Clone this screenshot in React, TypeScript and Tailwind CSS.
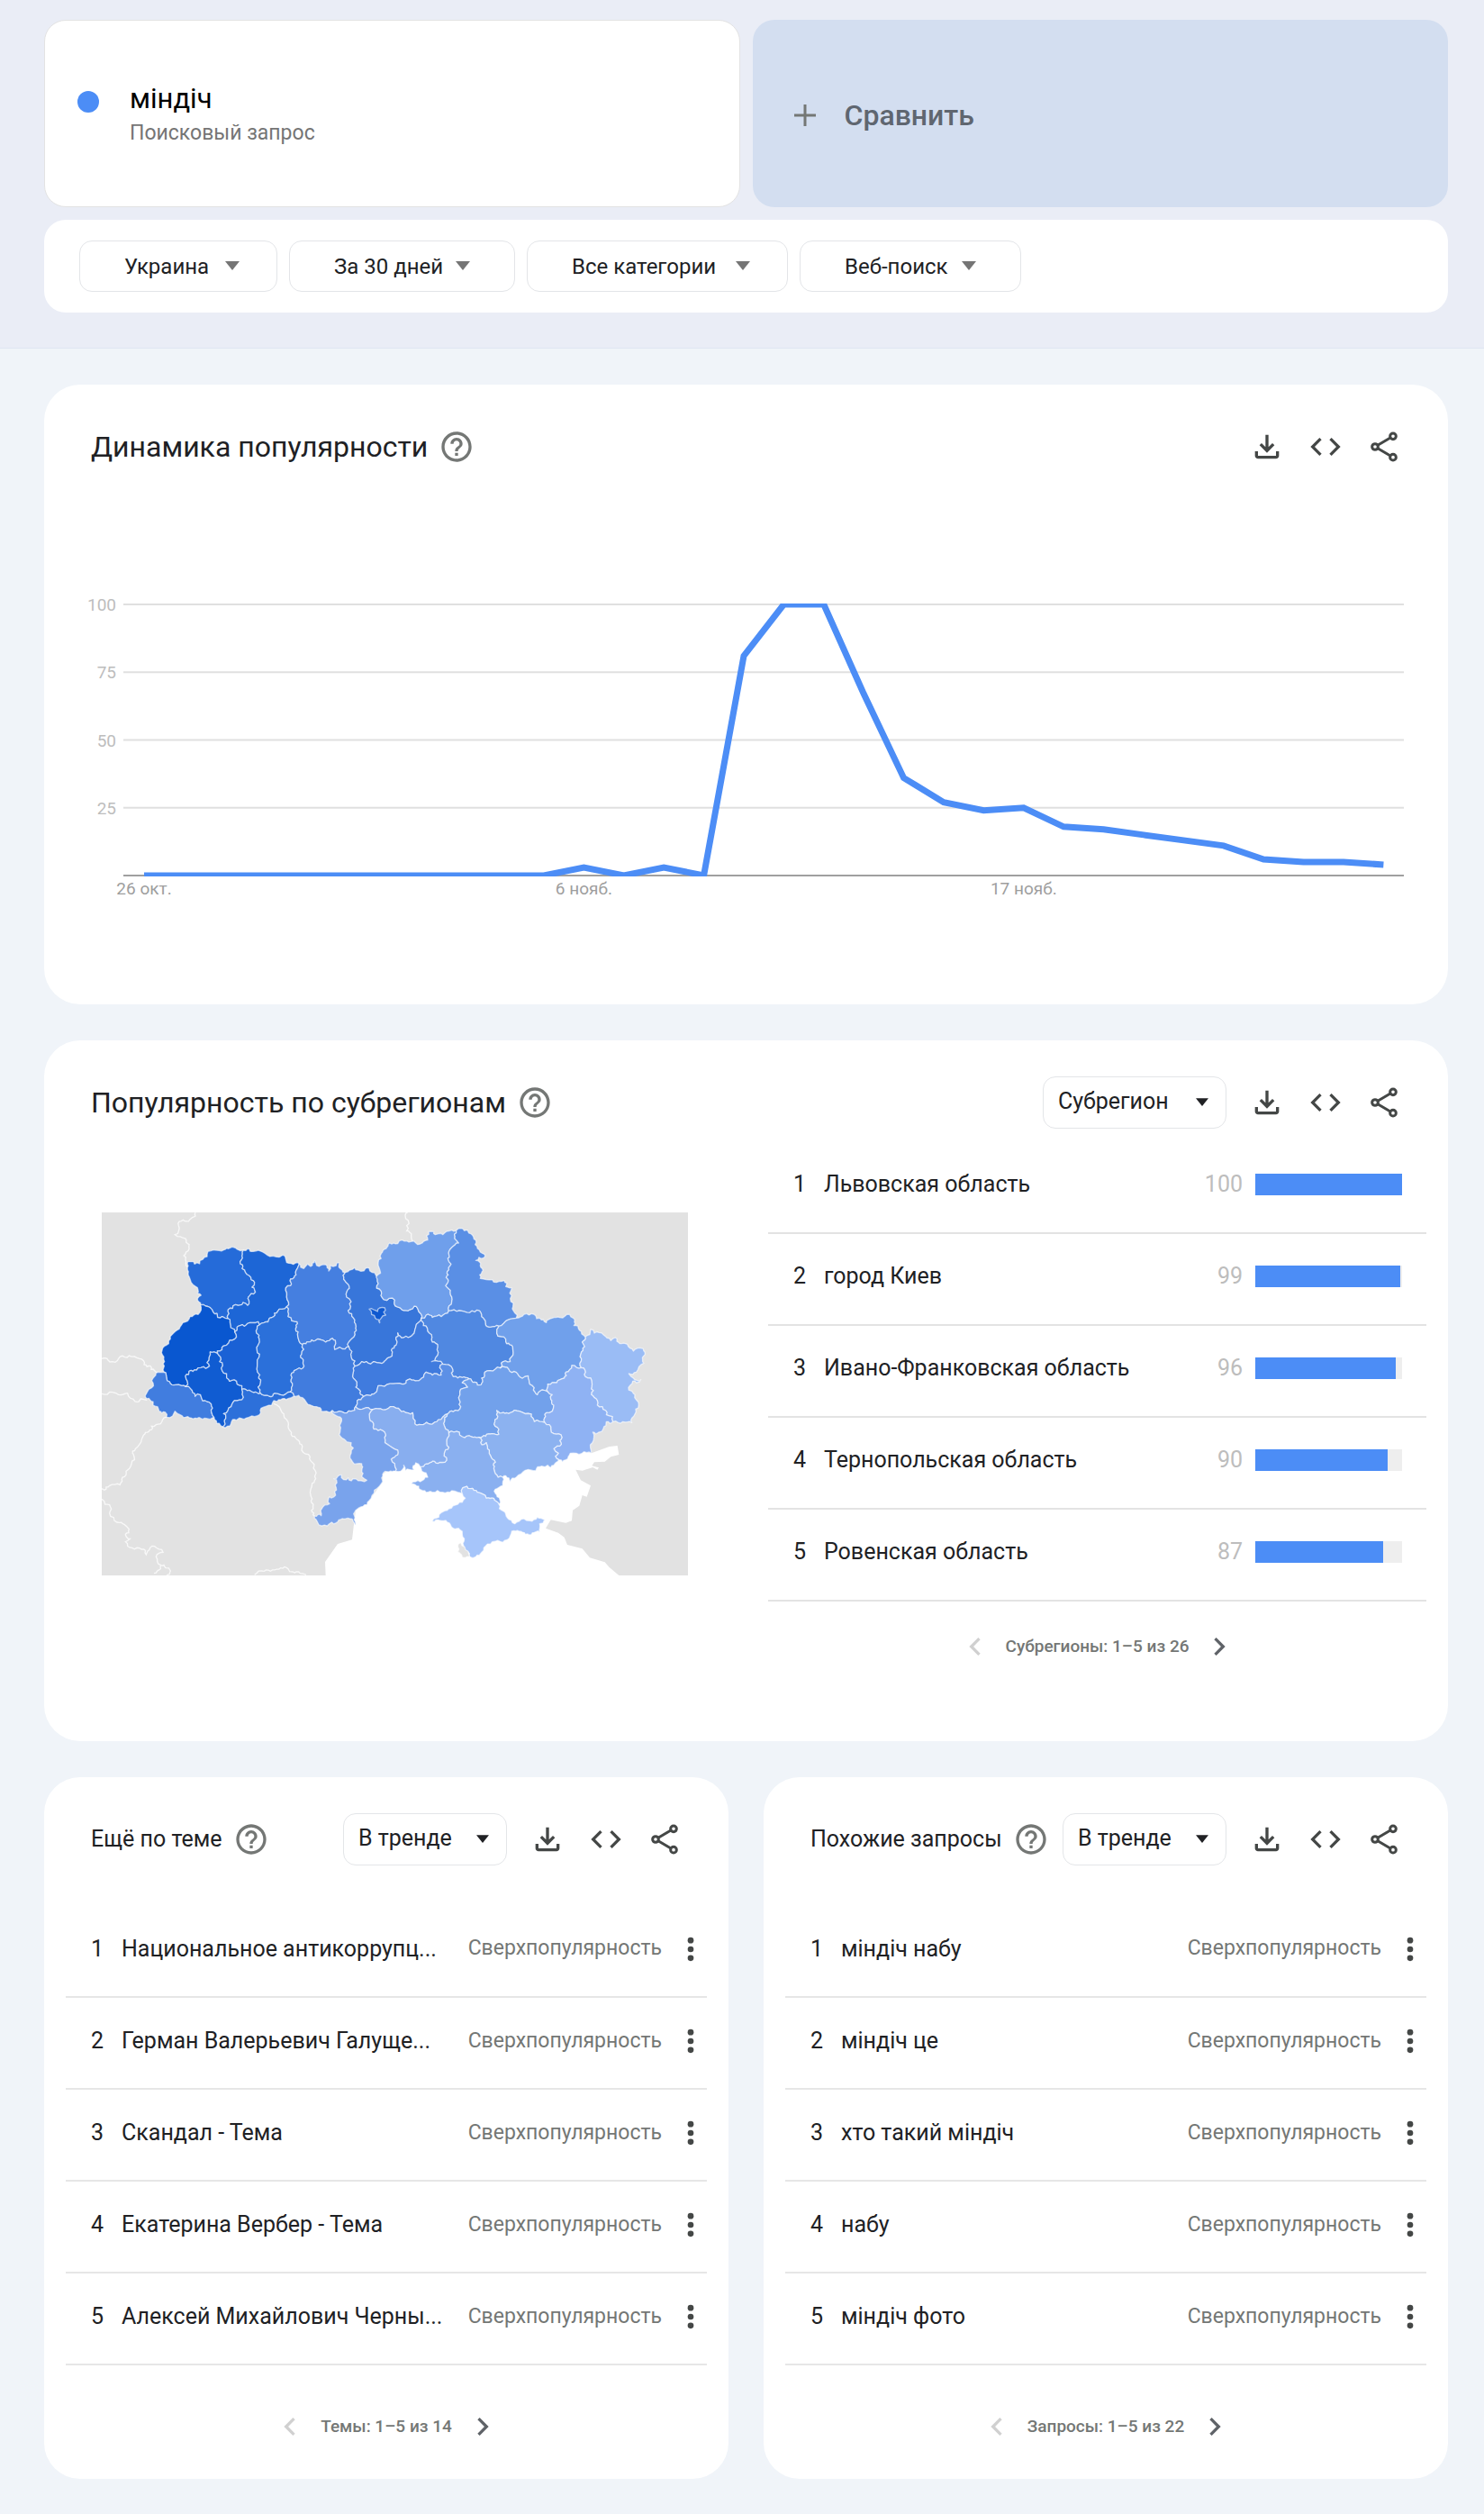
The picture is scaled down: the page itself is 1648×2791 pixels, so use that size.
import { useState } from 'react';
import type { ReactNode } from 'react';

interface Region {
  name: string;
  fill: string;
  points: string;
}

interface RelatedRow {
  name: string;
  metric: string;
}

const TIMELINE = [
  0, 0, 0, 0, 0, 0, 0, 0, 0, 0, 0, 3, 0, 3, 0, 81, 100, 100, 67, 36, 27, 24, 25, 18, 17, 15, 13, 11, 6, 5, 5, 4,
];

const SUBREGIONS = [
  { name: 'Львовская область', value: 100 },
  { name: 'город Киев', value: 99 },
  { name: 'Ивано-Франковская область', value: 96 },
  { name: 'Тернопольская область', value: 90 },
  { name: 'Ровенская область', value: 87 },
];

const TOPICS: RelatedRow[] = [
  { name: 'Национальное антикоррупц...', metric: 'Сверхпопулярность' },
  { name: 'Герман Валерьевич Галуще...', metric: 'Сверхпопулярность' },
  { name: 'Скандал - Тема', metric: 'Сверхпопулярность' },
  { name: 'Екатерина Вербер - Тема', metric: 'Сверхпопулярность' },
  { name: 'Алексей Михайлович Черны...', metric: 'Сверхпопулярность' },
];

const QUERIES: RelatedRow[] = [
  { name: 'міндіч набу', metric: 'Сверхпопулярность' },
  { name: 'міндіч це', metric: 'Сверхпопулярность' },
  { name: 'хто такий міндіч', metric: 'Сверхпопулярность' },
  { name: 'набу', metric: 'Сверхпопулярность' },
  { name: 'міндіч фото', metric: 'Сверхпопулярность' },
];

const REGIONS: Region[] = [
  { name: 'Волынская', fill: '#256bd9', points: '326,212 345,212 348,220 365,219 390,195 393,178 430,175 445,173 467,166 490,171 511,174 508,200 500,212 507,235 518,248 530,258 537,272 548,280 540,297 548,305 545,320 532,325 530,345 525,358 510,348 485,355 475,368 460,372 463,385 457,395 460,402 450,400 440,395 425,398 410,380 400,365 385,360 368,356 358,335 370,324 358,318 352,295 330,262 325,240' },
  { name: 'Ровенская', fill: '#1d66d6', points: '511,174 525,169 545,178 575,180 590,190 610,193 630,197 650,195 655,215 670,218 697,220 685,245 680,265 668,270 668,292 652,300 655,330 655,362 640,370 625,378 612,395 598,400 580,415 564,423 560,412 540,415 525,418 500,425 490,430 482,446 475,435 468,425 466,405 460,402 457,395 463,385 460,372 475,368 485,355 510,348 525,358 530,345 532,325 545,320 548,305 540,297 548,280 537,272 530,258 518,248 507,235 500,212 508,200' },
  { name: 'Львовская', fill: '#0957d0', points: '368,356 385,360 400,365 410,380 425,398 440,395 450,400 460,402 466,405 468,425 475,435 482,446 487,455 482,470 465,474 455,490 440,505 424,510 425,518 400,513 397,530 390,548 398,560 385,568 355,573 330,577 318,592 318,628 305,625 285,622 265,612 255,600 252,582 243,573 248,545 238,515 255,490 290,440 333,395 360,388' },
  { name: 'Закарпатская', fill: '#417ddf', points: '226,580 243,580 252,582 255,600 265,612 285,622 305,625 318,628 335,635 350,660 368,655 375,675 390,678 408,700 405,715 413,730 400,737 375,737 350,733 325,728 300,722 283,710 275,726 255,730 250,713 230,710 225,695 210,690 200,673 190,668 190,647 205,632 210,600' },
  { name: 'Ивано-Франковская', fill: '#105cd2', points: '318,628 318,592 330,577 355,573 385,568 398,560 390,548 397,530 400,513 425,518 432,545 440,575 455,585 465,610 480,605 490,620 506,625 506,637 506,672 490,675 470,695 445,718 448,740 442,762 435,758 415,738 413,730 405,715 408,700 390,678 375,675 368,655 350,660 335,635' },
  { name: 'Тернопольская', fill: '#1a61d5', points: '482,446 490,430 500,425 525,418 540,415 560,412 564,423 555,450 560,490 565,520 557,560 562,600 560,630 568,650 545,648 530,640 506,637 506,625 490,620 480,605 465,610 455,585 440,575 432,545 425,518 424,510 440,505 455,490 465,474 482,470 487,455' },
  { name: 'Черновицкая', fill: '#2d70da', points: '506,637 530,640 545,648 568,650 597,660 615,650 635,655 668,645 680,660 660,668 635,672 612,675 605,690 570,700 558,725 520,733 475,738 458,760 442,762 448,740 445,718 470,695 490,675 506,672' },
  { name: 'Хмельницкая', fill: '#2b70da', points: '564,423 580,415 598,400 612,395 625,378 640,370 655,362 660,395 690,412 685,435 692,460 697,478 708,487 705,520 713,560 690,570 672,583 672,640 668,645 635,655 615,650 597,660 568,650 560,630 562,600 557,560 565,520 560,490 555,450' },
  { name: 'Житомирская', fill: '#457fe0', points: '697,220 712,235 725,220 735,228 748,208 755,225 785,222 795,243 800,225 820,225 830,215 840,240 850,248 845,270 862,290 855,330 870,345 860,375 878,400 883,455 862,480 862,495 850,503 815,505 808,468 785,480 750,475 708,487 697,478 692,460 685,435 690,412 660,395 655,362 655,330 652,300 668,292 668,270 680,265 685,245' },
  { name: 'Киевская', fill: '#3876da', points: '850,248 865,240 882,232 893,240 930,234 940,248 957,270 955,300 970,310 978,338 1015,340 1022,362 1040,373 1065,372 1080,360 1095,378 1104,400 1085,430 1080,450 1060,465 1045,465 1025,450 1020,490 1000,530 985,540 945,545 935,553 905,545 882,560 870,530 862,495 862,480 883,455 878,400 860,375 870,345 855,330 862,290 845,270' },
  { name: 'Киев', fill: '#0f59d0', points: '930,370 945,372 958,378 965,366 982,366 978,380 985,390 970,400 965,416 950,400 938,388' },
  { name: 'Черниговская', fill: '#6f9feb', points: '957,270 968,250 960,215 970,185 998,150 1025,152 1040,140 1070,145 1100,153 1125,140 1128,112 1145,112 1150,122 1175,122 1205,107 1220,108 1215,135 1228,150 1205,165 1195,180 1203,220 1190,245 1190,285 1185,292 1200,315 1205,345 1195,376 1170,395 1140,398 1120,390 1104,400 1095,378 1080,360 1065,372 1040,373 1022,362 1015,340 978,338 970,310 955,300' },
  { name: 'Сумская', fill: '#5a8fe5', points: '1220,108 1258,108 1270,120 1285,140 1283,155 1300,180 1315,188 1310,200 1285,208 1300,225 1300,268 1340,272 1345,280 1380,275 1385,295 1405,300 1400,335 1410,350 1410,375 1423,390 1420,400 1400,403 1385,410 1370,425 1362,427 1335,430 1310,400 1298,376 1265,382 1230,375 1195,376 1205,345 1200,315 1185,292 1190,285 1190,245 1203,220 1195,180 1205,165 1228,150 1215,135' },
  { name: 'Полтавская', fill: '#5088e1', points: '1104,400 1120,390 1140,398 1170,395 1195,376 1230,375 1265,382 1298,376 1310,400 1335,430 1362,427 1355,450 1385,470 1388,485 1408,495 1410,515 1400,545 1370,550 1367,566 1350,570 1315,580 1305,600 1303,622 1262,602 1240,598 1210,595 1208,570 1175,553 1138,545 1160,515 1158,495 1140,480 1130,450 1110,425' },
  { name: 'Черкасская', fill: '#407bde', points: '1104,400 1110,425 1130,450 1140,480 1158,495 1160,515 1138,545 1175,553 1165,565 1170,590 1140,590 1120,580 1105,600 1060,605 1040,620 960,625 955,645 935,658 910,662 885,630 875,590 882,560 905,545 935,553 945,545 985,540 1000,530 1020,490 1025,450 1045,465 1060,465 1080,450 1085,430' },
  { name: 'Винницкая', fill: '#417cde', points: '708,487 750,475 785,480 808,468 815,505 850,503 862,495 870,530 882,560 875,590 885,630 910,662 890,675 885,695 870,710 840,712 807,708 770,710 755,695 735,690 708,665 680,660 668,645 672,640 672,583 690,570 713,560 705,520' },
  { name: 'Кировоградская', fill: '#5c90e6', points: '910,662 935,658 955,645 960,625 1040,620 1060,605 1105,600 1120,580 1140,590 1170,590 1165,565 1175,553 1208,570 1210,595 1240,598 1262,602 1240,615 1258,630 1232,645 1228,665 1235,695 1210,712 1190,720 1180,725 1155,745 1110,755 1082,752 1075,715 1045,710 1020,700 1000,695 985,705 940,705 915,700 885,695 890,675' },
  { name: 'Днепропетровская', fill: '#72a1eb', points: '1262,602 1303,622 1305,600 1315,580 1350,570 1367,566 1395,570 1420,580 1440,600 1460,592 1465,620 1480,632 1490,655 1500,642 1525,645 1540,655 1535,670 1545,690 1540,710 1520,715 1512,740 1515,748 1480,745 1470,720 1430,710 1400,715 1355,708 1350,760 1362,770 1362,787 1340,785 1295,797 1270,795 1240,795 1230,780 1195,782 1185,770 1190,720 1210,712 1235,695 1228,665 1232,645 1258,630 1240,615' },
  { name: 'Харьковская', fill: '#70a0eb', points: '1362,427 1370,425 1385,410 1400,403 1420,400 1445,388 1480,388 1488,402 1510,405 1520,415 1540,400 1565,398 1598,388 1610,400 1612,425 1630,440 1650,462 1640,480 1648,495 1635,520 1632,550 1637,565 1605,558 1585,580 1580,600 1555,615 1525,620 1525,645 1500,642 1490,655 1480,632 1465,620 1460,592 1440,600 1420,580 1395,570 1367,566 1370,550 1400,545 1410,515 1408,495 1388,485 1385,470 1355,450' },
  { name: 'Луганская', fill: '#9abcf5', points: '1650,462 1665,455 1668,437 1680,450 1710,455 1735,475 1750,465 1765,485 1790,487 1810,510 1843,502 1845,550 1820,580 1795,585 1810,600 1835,605 1820,615 1808,610 1795,640 1815,655 1828,690 1815,720 1805,748 1775,745 1742,745 1740,728 1720,722 1718,708 1690,690 1680,665 1670,655 1668,600 1650,595 1645,567 1637,565 1632,550 1635,520 1648,495 1640,480' },
  { name: 'Донецкая', fill: '#8fb2f3', points: '1637,565 1645,567 1650,595 1668,600 1670,655 1680,665 1690,690 1718,708 1720,722 1740,728 1742,745 1720,745 1710,768 1675,780 1670,850 1655,848 1620,850 1600,850 1585,872 1562,872 1550,860 1560,850 1545,835 1570,820 1572,797 1545,785 1535,770 1515,748 1512,740 1520,715 1540,710 1545,690 1535,670 1540,655 1525,645 1525,620 1555,615 1580,600 1585,580 1605,558' },
  { name: 'Запорожская', fill: '#8cb2f0', points: '1295,797 1340,785 1362,787 1362,770 1350,760 1355,708 1400,715 1430,710 1470,720 1480,745 1515,748 1535,770 1545,785 1572,797 1570,820 1545,835 1560,850 1550,860 1562,872 1545,890 1535,898 1525,890 1505,893 1485,908 1450,907 1420,930 1400,945 1385,925 1375,930 1350,918 1345,900 1350,880 1335,860 1330,840 1320,815 1305,822' },
  { name: 'Херсонская', fill: '#8ab0f0', points: '1195,782 1230,780 1240,795 1270,795 1295,797 1305,822 1320,815 1330,840 1335,860 1350,880 1345,900 1350,918 1375,930 1375,958 1350,970 1362,1020 1345,1000 1320,1000 1290,980 1242,965 1240,985 1225,980 1205,975 1175,980 1140,980 1115,975 1095,960 1070,952 1100,945 1125,930 1105,910 1100,895 1120,885 1165,880 1182,880 1180,850 1195,830 1190,800' },
  { name: 'Николаевская', fill: '#88aeef', points: '940,705 985,705 1000,695 1020,700 1045,710 1075,715 1082,752 1110,755 1155,745 1180,725 1190,720 1185,770 1195,782 1190,800 1195,830 1180,850 1182,880 1165,880 1120,885 1100,895 1085,882 1080,905 1050,908 1045,890 1035,910 1018,910 1015,885 1003,870 1025,855 1025,840 990,820 985,790 975,775 945,770 940,745 930,720' },
  { name: 'Одесская', fill: '#79a3ec', points: '807,708 840,712 870,710 885,695 915,700 940,705 930,720 940,745 945,770 975,775 985,790 990,820 1025,840 1025,855 1003,870 1015,885 1018,910 975,920 975,945 930,1008 885,1040 884,1090 865,1068 840,1068 820,1082 805,1080 790,1092 758,1080 748,1060 770,1058 772,1035 798,1018 798,995 818,990 820,965 812,935 838,922 845,938 860,932 870,942 885,935 905,942 922,940 905,928 905,885 875,880 870,850 870,815 855,812 835,795 835,765 838,735 815,722' },
  { name: 'Крым', fill: '#a6c5fa', points: '1242,965 1290,980 1320,1000 1345,1000 1362,1020 1390,1065 1415,1085 1445,1068 1465,1075 1490,1063 1515,1072 1498,1085 1498,1112 1450,1120 1430,1110 1405,1110 1400,1125 1375,1147 1340,1145 1312,1165 1305,1180 1285,1195 1265,1195 1245,1160 1242,1150 1240,1120 1232,1105 1210,1100 1190,1080 1140,1077 1145,1068 1170,1048 1195,1035 1225,1020 1250,1000 1240,985' },
  { name: 'Севастополь', fill: '#e2e2e2', points: '1235,1148 1248,1162 1265,1195 1250,1198 1225,1178' },
];

const SEA =
  '975,920 975,945 930,1008 885,1040 878,1095 873,1138 825,1152 783,1212 785,1257 1762,1257 1730,1230 1715,1213 1665,1198 1640,1168 1590,1155 1580,1130 1560,1115 1518,1100 1535,1072 1585,1082 1605,1075 1608,1040 1630,1025 1640,990 1655,995 1668,958 1635,940 1618,905 1640,908 1675,897 1690,905 1695,898 1672,892 1680,880 1715,878 1735,862 1762,855 1757,825 1730,828 1670,850 1500,800 1200,860 1040,870';

const NEIGHBOUR_BORDERS = [
  '351,48 351,60 310,73 295,92 283,122 318,135 330,155 320,180 318,205 326,230',
  '39,535 60,540 75,545 100,528 130,525 165,535 180,555 215,575 228,580',
  '39,652 75,647 95,655 125,650 150,678 190,673',
  '255,730 235,752 205,760 178,790 165,820 145,855 138,885 120,910 108,930 100,955 65,958 48,973 39,968',
  '39,1003 50,1020 65,1022 65,1050 90,1080 115,1088 130,1103 118,1120 133,1135 118,1145 140,1165 172,1170 187,1188 200,1165 215,1160 243,1180 230,1183 220,1195 235,1222 235,1235 213,1250',
  '235,1222 268,1242 255,1257',
  '548,1255 580,1243 635,1232 660,1235 675,1245 700,1250 720,1255',
  '612,685 640,715 660,760 685,800 705,840 733,862 748,905 740,950 735,990 738,1040 748,1060',
  '1058,48 1050,58 1060,75 1055,110 1070,125 1075,145',
];

type Point = [number, number];

// Splits long edges and nudges the middle so borders look natural.
// The nudge depends only on the edge itself, so neighbouring regions stay aligned.
function splitEdge(a: Point, b: Point): Point[] {
  const length = Math.hypot(b[0] - a[0], b[1] - a[1]);
  if (length < 11) return [b];
  const dir = a[0] < b[0] || (a[0] === b[0] && a[1] < b[1]) ? 1 : -1;
  const seed = Math.sin((a[0] + b[0]) * 12.9898 + (a[1] + b[1]) * 78.233) * 43758.5453;
  const nudge = (seed - Math.floor(seed) - 0.5) * Math.min(length * 0.6, 14) * dir;
  const mid: Point = [
    (a[0] + b[0]) / 2 - ((b[1] - a[1]) / length) * nudge,
    (a[1] + b[1]) / 2 + ((b[0] - a[0]) / length) * nudge,
  ];
  return [...splitEdge(a, mid), ...splitEdge(mid, b)];
}

function outline(points: string, closed = true) {
  const list = points.split(' ').map((pair) => pair.split(',').map(Number) as Point);
  if (closed) list.push(list[0]);
  const result: Point[] = [list[0]];
  for (let i = 1; i < list.length; i++) {
    result.push(...splitEdge(list[i - 1], list[i]));
  }
  return result.map(([x, y]) => `${x.toFixed(1)},${y.toFixed(1)}`).join(' ');
}

function Icon({ d, className = 'w-10 h-10' }: { d: string; className?: string }) {
  return (
    <svg viewBox="0 0 24 24" fill="currentColor" aria-hidden="true" className={`shrink-0 ${className}`}>
      <path d={d} />
    </svg>
  );
}

const ICONS = {
  help: 'M11 18h2v-2h-2v2zm1-16C6.48 2 2 6.48 2 12s4.48 10 10 10 10-4.48 10-10S17.52 2 12 2zm0 18c-4.41 0-8-3.59-8-8s3.59-8 8-8 8 3.59 8 8-3.59 8-8 8zm0-14c-2.21 0-4 1.79-4 4h2c0-1.1.9-2 2-2s2 .9 2 2c0 2-3 1.75-3 5h2c0-2.25 3-2.5 3-5 0-2.21-1.79-4-4-4z',
  download: 'M12 16l-5-5 1.4-1.45 2.6 2.6V4h2v8.15l2.6-2.6L17 11zM6 20q-.825 0-1.412-.587Q4 18.825 4 18v-3h2v3h12v-3h2v3q0 .825-.587 1.413Q18.825 20 18 20z',
  code: 'M9.4 16.6L4.8 12l4.6-4.6L8 6l-6 6 6 6 1.4-1.4zm5.2 0l4.6-4.6-4.6-4.6L16 6l6 6-6 6-1.4-1.4z',
  left: 'M15.41 7.41L14 6l-6 6 6 6 1.41-1.41L10.83 12z',
  right: 'M10 6L8.59 7.41 13.17 12l-4.58 4.59L10 18l6-6z',
};

function ShareIcon() {
  return (
    <svg viewBox="0 0 24 24" fill="none" stroke="currentColor" strokeWidth="1.8" aria-hidden="true" className="w-10 h-10">
      <path d="M7.8 11l8.4-5M7.8 13l8.4 5" />
      <circle cx="6" cy="12" r="2" />
      <circle cx="18" cy="5" r="2" />
      <circle cx="18" cy="19" r="2" />
    </svg>
  );
}

function Triangle({ className }: { className: string }) {
  return (
    <svg viewBox="0 0 16 10" fill="currentColor" aria-hidden="true" className={`pointer-events-none absolute ${className}`}>
      <path d="M0 0h16L8 10z" />
    </svg>
  );
}

function FilterSelect({ label, value, className, arrow }: { label: string; value: string; className: string; arrow: string }) {
  return (
    <div className="relative">
      <select
        aria-label={label}
        defaultValue={value}
        className={`block h-[57px] appearance-none rounded-[14px] border border-[#e3e5e8] bg-white pl-[49px] text-2xl text-[#202124] ${className}`}
      >
        <option>{value}</option>
      </select>
      <Triangle className={`top-[23px] w-4 h-[10px] text-[#757575] ${arrow}`} />
    </div>
  );
}

function CardSelect({ label, value, className }: { label: string; value: string; className: string }) {
  return (
    <div className="relative">
      <select
        aria-label={label}
        defaultValue={value}
        className={`block h-[58px] appearance-none rounded-[14px] border border-[#e3e5e8] bg-white pl-4 pb-0.5 text-[25px] text-[#202124] ${className}`}
      >
        <option>{value}</option>
      </select>
      <Triangle className="right-5 top-6 w-[14px] h-[9px] text-[#202124]" />
    </div>
  );
}

interface CardHeaderProps {
  title: string;
  titleClass: string;
  children?: ReactNode;
}

function CardHeader({ title, titleClass, children }: CardHeaderProps) {
  return (
    <div className="flex h-[58px] items-center justify-between pl-[52px] pr-[51px]">
      <div className="flex items-center gap-3">
        <h2 className={`whitespace-nowrap text-[#202124] ${titleClass}`}>{title}</h2>
        <button type="button" aria-label="Справка" className="text-[#747775]">
          <Icon d={ICONS.help} />
        </button>
      </div>
      <div className="flex items-center gap-[25px] text-[#444746]">
        {children}
        <button type="button" aria-label="Скачать CSV">
          <Icon d={ICONS.download} />
        </button>
        <button type="button" aria-label="Встроить">
          <Icon d={ICONS.code} />
        </button>
        <button type="button" aria-label="Поделиться">
          <ShareIcon />
        </button>
      </div>
    </div>
  );
}

function Pager({ text, className }: { text: string; className: string }) {
  return (
    <div className={`flex items-center justify-center gap-[14px] text-[#747775] ${className}`}>
      <button type="button" disabled aria-label="Назад" className="text-[#d0d0d0]">
        <Icon d={ICONS.left} />
      </button>
      <span className="text-[19px] font-medium">{text}</span>
      <button type="button" aria-label="Вперёд" className="text-[#5f6368]">
        <Icon d={ICONS.right} />
      </button>
    </div>
  );
}

function TimelineChart() {
  const toX = (index: number) => 111 + index * 44.4;
  const toY = (value: number) => 312 - value * 3.01;
  const line = TIMELINE.map((value, index) => `${toX(index)},${toY(value)}`).join(' ');

  return (
    <svg viewBox="0 0 1559 340" role="img" aria-label="Динамика популярности" className="mt-[135px] block w-full font-['Roboto',sans-serif] font-normal">
      <clipPath id="plot">
        <rect x="88" y="10" width="1422" height="303" />
      </clipPath>
      {[100, 75, 50, 25].map((tick) => (
        <g key={tick}>
          <line x1="88" x2="1510" y1={toY(tick)} y2={toY(tick)} stroke="#e0e0e0" strokeWidth="2" />
          <text x="80" y={toY(tick) + 7} textAnchor="end" fontSize="19" fill="#bdbdbd">{tick}</text>
        </g>
      ))}
      <line x1="88" x2="1510" y1="312" y2="312" stroke="#a0a0a0" strokeWidth="2" />
      <polyline points={line} fill="none" stroke="#4c8df6" strokeWidth="7" clipPath="url(#plot)" />
      <g fontSize="19" fill="#9e9e9e" textAnchor="middle">
        <text x={toX(0)} y="333">26 окт.</text>
        <text x={toX(11)} y="333">6 нояб.</text>
        <text x={toX(22)} y="333">17 нояб.</text>
      </g>
    </svg>
  );
}

function RegionMap() {
  return (
    <svg viewBox="39 48 1953 1209" role="img" aria-label="Карта субрегионов" className="block w-full">
      <rect x="39" y="48" width="1953" height="1209" fill="#e2e2e2" />
      <polygon points={SEA} fill="#ffffff" />
      <g fill="none" stroke="#f8f8f8" strokeWidth="4">
        {NEIGHBOUR_BORDERS.map((points) => (
          <polyline key={points} points={outline(points, false)} />
        ))}
      </g>
      <g stroke="#ffffff" strokeOpacity="0.6" strokeWidth="4" strokeLinejoin="round">
        {REGIONS.map((region) => (
          <polygon key={region.name} points={outline(region.points)} fill={region.fill}>
            <title>{region.name}</title>
          </polygon>
        ))}
      </g>
    </svg>
  );
}

function RelatedCard({ title, label, rows, pager }: { title: string; label: string; rows: RelatedRow[]; pager: string }) {
  return (
    <section className="rounded-[40px] bg-white pt-10 pb-[38px]">
      <CardHeader title={title} titleClass="text-[25px]">
        <CardSelect label={label} value="В тренде" className="w-[182px]" />
      </CardHeader>
      <div className="mt-11 px-6">
        <table className="w-full table-fixed border-collapse">
          <tbody>
            {rows.map((row, index) => (
              <tr key={row.name} className="h-[102px] border-b-2 border-[#e6e6e6] text-[25px] text-[#202124]">
                <td className="w-[62px] pl-7 pb-1">{index + 1}</td>
                <td className="pb-1 whitespace-nowrap">{row.name}</td>
                <td className="w-[237px] pb-1 text-right text-[23px] text-[#747775]">{row.metric}</td>
                <td className="w-[50px] pb-1">
                  <button type="button" aria-label="Ещё" className="ml-4 flex w-8 justify-center text-[#444746]">
                    <svg viewBox="8 0 8 24" fill="currentColor" className="h-10 w-[14px]">
                      <circle cx="12" cy="6.1" r="2" />
                      <circle cx="12" cy="12" r="2" />
                      <circle cx="12" cy="17.9" r="2" />
                    </svg>
                  </button>
                </td>
              </tr>
            ))}
          </tbody>
        </table>
        <Pager text={pager} className="mt-12" />
      </div>
    </section>
  );
}

export default function App() {
  const [term] = useState('міндіч');

  return (
    <div className="min-h-screen bg-[#f0f4f9] font-['Roboto','Noto_Sans',sans-serif] text-[#202124]">
      <header className="border-b border-[#dfe6f2] bg-[#eaedf6] pt-[22px] pr-10 pb-[39px] pl-[49px]">
        <div className="grid grid-cols-2 gap-[14px]">
          <div className="flex min-h-[208px] items-center rounded-3xl border border-[#e3e3e3] bg-white pl-[36px]">
            <span className="mb-[26px] h-6 w-6 rounded-full bg-[#4c8df6]" />
            <div className="ml-[34px] pt-1">
              <div className="text-[31px] leading-10 text-black">{term}</div>
              <div className="text-[23px] leading-9 text-[#757575]">Поисковый запрос</div>
            </div>
          </div>
          <button
            type="button"
            className="flex items-center rounded-3xl bg-[#d3def0] pt-1 pl-[46px] text-[32px] font-medium text-[#5f6670]"
          >
            <svg viewBox="0 0 24 24" stroke="#747775" strokeWidth="3" className="h-6 w-6">
              <path d="M12 0v24M0 12h24" />
            </svg>
            <span className="ml-8">Сравнить</span>
          </button>
        </div>
        <div className="mt-[14px] flex gap-[13px] rounded-3xl bg-white px-[39px] py-[23px]">
          <FilterSelect label="Страна" value="Украина" className="w-[220px]" arrow="right-[42px]" />
          <FilterSelect label="Период" value="За 30 дней" className="w-[251px]" arrow="right-[50px]" />
          <FilterSelect label="Категория" value="Все категории" className="w-[290px]" arrow="right-[42px]" />
          <FilterSelect label="Тип поиска" value="Веб-поиск" className="w-[246px]" arrow="right-[50px]" />
        </div>
      </header>

      <main className="flex flex-col gap-10 pt-10 pr-10 pb-[39px] pl-[49px]">
        <section className="rounded-[40px] bg-white pt-10 pb-[115px]">
          <CardHeader title="Динамика популярности" titleClass="text-[32px]" />
          <TimelineChart />
        </section>

        <section className="rounded-[40px] bg-white pt-10 pb-[85px]">
          <CardHeader title="Популярность по субрегионам" titleClass="text-[32px]">
            <CardSelect label="Разрешение" value="Субрегион" className="w-[204px]" />
          </CardHeader>
          <div className="flex gap-[89px] pl-16 pr-6">
            <div className="flex-[651] pt-[93px]">
              <RegionMap />
            </div>
            <div className="flex-[731] pt-[14px]">
              <table className="w-full border-collapse">
                <tbody>
                  {SUBREGIONS.map((row, index) => (
                    <tr key={row.name} className="h-[102px] border-b-2 border-[#e3e3e3] text-[25px] text-[#202124]">
                      <td className="w-[62px] pl-7 pb-1.5">{index + 1}</td>
                      <td className="pb-1.5 whitespace-nowrap">{row.name}</td>
                      <td className="pr-[14px] pb-1.5 text-right text-[#bdbdbd]">{row.value}</td>
                      <td className="w-[190px] pr-[27px] pb-1.5">
                        <div className="h-6 bg-[#eeeeee]">
                          <div className="h-full bg-[#4c8df6]" style={{ width: `${row.value}%` }} />
                        </div>
                      </td>
                    </tr>
                  ))}
                </tbody>
              </table>
              <Pager text="Субрегионы: 1–5 из 26" className="mt-[30px]" />
            </div>
          </div>
        </section>

        <div className="grid grid-cols-2 gap-[39px]">
          <RelatedCard title="Ещё по теме" label="Сортировка тем" rows={TOPICS} pager="Темы: 1–5 из 14" />
          <RelatedCard title="Похожие запросы" label="Сортировка запросов" rows={QUERIES} pager="Запросы: 1–5 из 22" />
        </div>
      </main>
    </div>
  );
}
